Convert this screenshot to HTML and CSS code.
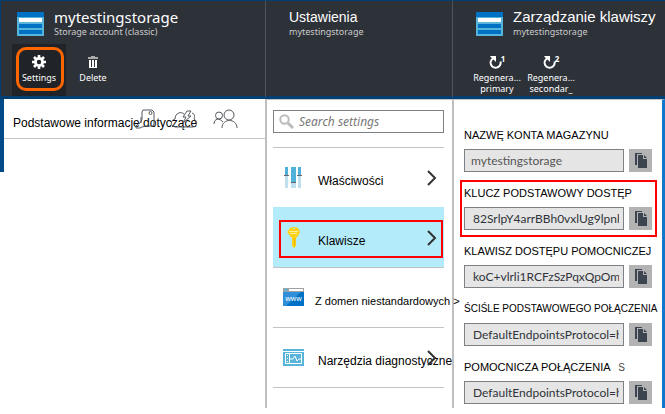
FILE: index.html
```html
<!DOCTYPE html>
<html lang="pl">
<head>
<meta charset="utf-8">
<title>mytestingstorage</title>
<link rel="stylesheet" href="styles.css">
</head>
<body>
<svg class="defs" width="0" height="0" aria-hidden="true">
  <symbol id="storage" viewBox="0 0 27 24">
    <path fill="#59b4d9" d="M0 0h27v24H0z"/><path fill="#0072c6" d="M0 0h27v5H0z"/>
    <path fill="#fff" d="M2 6h23v4H2z"/><path fill="#0072c6" d="M2 12h23v4H2zM2 18h23v4H2z"/>
  </symbol>
  <symbol id="copy" viewBox="0 0 23 23">
    <path fill="#3c454f" d="M6 4h7v1H8v11H6z"/>
    <path fill="#3c454f" d="M9 6h5v4h4v9H9z"/><path fill="#3c454f" d="M15 6l3 3h-3z"/>
  </symbol>
  <symbol id="chevron" viewBox="0 0 10 16">
    <path fill="none" stroke="#333" stroke-width="2" d="M1 1l7 7-7 7"/>
  </symbol>
  <symbol id="regen" viewBox="0 0 14 14">
    <path fill="none" stroke="#fff" stroke-width="2" d="M4 3.500a5 5 0 1 0 7.500 3"/>
    <path fill="#fff" d="M1 1h6v6L5 5 2.500 3z"/>
  </symbol>
</svg>
<main class="portal">
  <section class="blade overview">
    <header class="head">
      <div class="title">
        <svg class="logo" aria-hidden="true"><use href="#storage"/></svg>
        <div><h1>mytestingstorage</h1><p>Storage account (classic)</p></div>
      </div>
      <div class="tools">
        <button class="tool active" type="button">
          <svg viewBox="0 0 14 14" aria-hidden="true"><circle cx="7" cy="7" r="3.600" fill="none" stroke="#fff" stroke-width="2.800"/><path stroke="#fff" stroke-width="2.600" d="M7 0v3M7 11v3M0 7h3M11 7h3M2 2l2 2M10 10l2 2M2 12l2-2M10 4l2-2"/></svg>
          <span>Settings</span>
        </button>
        <button class="tool" type="button">
          <svg viewBox="0 0 14 14" aria-hidden="true"><path fill="#aaa" d="M5 1h4v1h3v2H2V2h3z"/><path fill="#fff" d="M3 5h8v8H3z"/><path stroke="#2d3138" d="M5.500 5v7M8.500 5v7"/></svg>
          <span>Delete</span>
        </button>
      </div>
    </header>
    <div class="body essentials">
      <div class="bar">
        <h2>Podstawowe informacje dotyczące</h2>
        <div class="marks">
          <svg width="20" height="20" viewBox="0 0 20 20" aria-hidden="true"><path d="M8 1h9l2 2v12l-1 2h-7l-4 1-2 1H1v-2l5-4 1-3V3z"/><path d="M6 8v6"/><circle cx="15.500" cy="4" r="1.500"/></svg>
          <svg width="28" height="20" viewBox="0 0 28 20" aria-hidden="true"><path d="M6 18c-6 0-6-7-1-8 0-6 6-8 9-5M17 2h4l-3 5h3l-8 7 3-6h-3zM22 4c3 1 3 4 2 6 4 2 3 8-1 8H6"/></svg>
          <svg width="25" height="20" viewBox="0 0 25 20" aria-hidden="true"><circle cx="6" cy="6.500" r="3.500"/><circle cx="16" cy="6" r="5"/><path d="M1 15c0-6 6-6 9-2M9 19c0-10 15-10 15 0"/></svg>
        </div>
      </div>
    </div>
  </section>

  <section class="blade settings">
    <header class="head">
      <div class="title"><div><h1 class="sans">Ustawienia</h1><p>mytestingstorage</p></div></div>
    </header>
    <div class="body">
      <label class="search">
        <svg width="15" height="15" viewBox="0 0 15 15" aria-hidden="true"><circle cx="5.500" cy="5.500" r="4.200" fill="none" stroke="#bbb" stroke-width="2"/><path stroke="#bbb" stroke-width="3" d="M9 9l5 5"/></svg>
        <input type="search" placeholder="Search settings" aria-label="Search settings">
      </label>
      <nav class="menu">
        <a href="#properties">
          <svg class="icon" viewBox="0 0 21 21" aria-hidden="true"><path fill="#bfdfee" d="M2 0h3v21H2zM8 0h5v21H8zM15 0h3v21h-3z"/><path fill="#4fb0d8" d="M2 0h3v8H2zM8 0h5v15H8zM15 0h3v8h-3z"/><path fill="#666" d="M1 8h5v1H1zM8 15h5v1H8zM14 8h5v1h-5z"/></svg>
          <span>Właściwości</span><svg class="chevron" aria-hidden="true"><use href="#chevron"/></svg>
        </a>
        <a class="selected" href="#keys">
          <svg class="icon" viewBox="0 0 21 21" aria-hidden="true"><path fill="#fcd116" d="M7 1l3-1h2l3 1 2 4-2 4-2 2v8l-2 2-2-2v-8L7 9 4 5z"/><path fill="#b3ebfb" d="M10 1h2v1h-2z"/><path stroke="#fff09a" d="M6 4.500h9M7 6.500h7"/><path stroke="#e9b000" d="M11.500 11v8"/></svg>
          <span>Klawisze</span><svg class="chevron" aria-hidden="true"><use href="#chevron"/></svg>
        </a>
        <a class="domain" href="#domain">
          <svg class="icon" viewBox="0 0 21 21" aria-hidden="true"><path fill="#a0a1a2" d="M0 1h21v5H0z"/><path fill="#0072c6" d="M0 5h21v14H0z"/><path fill="#2f8fd8" d="M0 5h18L3 19H0z"/><path fill="#fff" d="M6 2h14v2H6z"/><circle cx="3" cy="3" r="1.500" fill="#59b4d9"/><text x="10.500" y="14" text-anchor="middle">www</text></svg>
          <span>Z domen niestandardowych &gt;</span>
        </a>
        <a href="#diagnostics">
          <svg class="icon" viewBox="0 0 21 21" aria-hidden="true"><path fill="#59b4d9" d="M0 2h21v17H0z"/><path fill="none" stroke="#fff" d="M0 4.500h21M2.500 6.500h16v10h-16zM6.500 7v10M7 12h3l2-3 2 5 2-2h3"/><path stroke="#fff" stroke-dasharray="1 2" d="M4.500 8v8"/></svg>
          <span>Narzędzia diagnostyczne</span><svg class="chevron" aria-hidden="true"><use href="#chevron"/></svg>
        </a>
      </nav>
    </div>
  </section>

  <section class="blade keys">
    <header class="head">
      <div class="title">
        <svg class="logo" aria-hidden="true"><use href="#storage"/></svg>
        <div><h1 class="sans">Zarządzanie klawiszy</h1><p>mytestingstorage</p></div>
      </div>
      <div class="tools">
        <button class="tool" type="button"><i><svg aria-hidden="true"><use href="#regen"/></svg><sup>1</sup></i><span>Regenera...<br>primary</span></button>
        <button class="tool" type="button"><i><svg aria-hidden="true"><use href="#regen"/></svg><sup>2</sup></i><span>Regenera...<br>secondar_</span></button>
      </div>
    </header>
    <form class="body">
      <div class="field account">
        <label for="f1">NAZWĘ KONTA MAGAZYNU</label>
        <div><input id="f1" readonly value="mytestingstorage"><button type="button" aria-label="Copy"><svg aria-hidden="true"><use href="#copy"/></svg></button></div>
      </div>
      <div class="field marked">
        <label for="f2">KLUCZ PODSTAWOWY DOSTĘP</label>
        <div><input id="f2" readonly value="82SrlpY4arrBBh0vxlUg9lpnk"><button type="button" aria-label="Copy"><svg aria-hidden="true"><use href="#copy"/></svg></button></div>
      </div>
      <div class="field">
        <label for="f3">KLAWISZ DOSTĘPU POMOCNICZEJ</label>
        <div><input id="f3" readonly value="koC+vlrli1RCFzSzPqxQpOm"><button type="button" aria-label="Copy"><svg aria-hidden="true"><use href="#copy"/></svg></button></div>
      </div>
      <div class="field small">
        <label for="f4">ŚCIŚLE PODSTAWOWEGO POŁĄCZENIA</label>
        <div><input id="f4" readonly value="DefaultEndpointsProtocol=h"><button type="button" aria-label="Copy"><svg aria-hidden="true"><use href="#copy"/></svg></button></div>
      </div>
      <div class="field">
        <label for="f5">POMOCNICZA POŁĄCZENIA <span>S</span></label>
        <div><input id="f5" readonly value="DefaultEndpointsProtocol=h"><button type="button" aria-label="Copy"><svg aria-hidden="true"><use href="#copy"/></svg></button></div>
      </div>
    </form>
  </section>
</main>
</body>
</html>
```
FILE: styles.css
```css
* { box-sizing: border-box; }
body { margin: 0; background: #fff; color: #000; font: 12px/16px "Liberation Sans", sans-serif; }
h1, h2, p { margin: 0; font-weight: 400; }
button, input { font: inherit; margin: 0; }
.defs { position: absolute; }
.portal { display: grid; grid-template-columns: 265fr 187fr 213fr; }
.blade { display: flex; flex-direction: column; min-width: 0; }
.blade + .blade .head { border-left: 1px solid #50545a; }

.head { height: 99px; background: #2d3138; border-top: 1px solid #003e73; border-bottom: 3px solid #003e73; color: #fff; }
.overview .head { border-left: 1px solid #003e73; }
.title { display: flex; gap: 10px; height: 43px; padding: 7px 0 0 16px; white-space: nowrap; }
.settings .title, .keys .title { padding-left: 23px; }
.logo { width: 27px; height: 24px; margin-top: 4px; }
h1 { font: 15px/18px "Noto Sans", sans-serif; }
h1.sans { font: 14px/18px "Liberation Sans", sans-serif; }
.keys h1.sans { font-size: 15px; }
.title p { font: 9px/12px "Noto Sans", sans-serif; color: #ccc; }
.tools { display: flex; padding-left: 11px; }
.keys .tools { padding-left: 17px; }
.tool { position: relative; width: 54px; height: 52px; padding: 11px 0 0; border: 0; background: none; color: #fff; font: 9px/11px "Noto Sans", sans-serif; display: flex; flex-direction: column; align-items: center; gap: 3px; white-space: nowrap; }
.tool svg { width: 14px; height: 14px; display: block; flex: none; }
.tool i { display: flex; font-style: normal; }
.tool sup { font: bold 8px/8px "Noto Sans", sans-serif; margin-left: -2px; }
.tool.active { background: #202328; }
.tool.active::after { content: ""; position: absolute; inset: 3px 2px 5px 4px; border: 3px solid #f60; border-radius: 10px; }

.body { flex: 1; border-top: 1px solid #c3c3c3; }
.blade + .blade .body { border-left: 2px solid #bfbfbf; }
.essentials { border-top: 0; }
.bar { position: relative; border-left: 4px solid #004b87; height: 73px; }
.bar h2 { font-size: 12px; line-height: 16px; padding: 16px 0 0 9px; height: 40px; border-bottom: 1px solid #c8c8c8; white-space: nowrap; }
.marks { position: absolute; top: 10px; left: 131px; display: flex; gap: 15px; }
.marks svg { fill: none; stroke: #555a60; }

.settings .body { padding: 10px 8px 19px 6px; }
.search { display: flex; align-items: center; gap: 5px; height: 23px; padding-left: 5px; border: 1px solid #7d8185; }
.search input { flex: 1; min-width: 0; border: 0; padding: 0; outline: 0; background: none; font: italic 12px/16px "Noto Sans", sans-serif; }
.search input::placeholder { color: #777; opacity: 1; }
.menu { margin-top: 14px; }
.menu a { display: flex; align-items: center; height: 60px; padding: 6px 7px 0 10px; border-top: 1px solid #c3c3c3; color: #000; text-decoration: none; white-space: nowrap; position: relative; }
.menu a:last-child { height: 61px; border-bottom: 1px solid #c3c3c3; }
.menu a:nth-child(2) { border-color: #b3ebfb; }
.menu .icon { width: 21px; height: 21px; flex: none; margin: -6px 14px 0 0; }
.menu .domain .icon { margin-right: 11px; }
.icon text { font: 7px "Noto Sans", sans-serif; fill: #fff; }
.menu span { flex: 1; min-width: 0; }
.menu .domain span { font-size: 11px; }
.chevron { width: 10px; height: 16px; flex: none; margin-top: -6px; }
.menu .selected { background: #b3ebfb; }
.selected::after { content: ""; position: absolute; inset: 12px 1px 9px 6px; border: 2px solid #f00; }

.keys .body { border-right: 3px solid #1177cc; padding: 25px 10px 4px; }
.field { position: relative; margin-bottom: 11px; }
.field:last-child { margin-bottom: 0; }
.field label { display: block; height: 24px; font-size: 11px; line-height: 20px; white-space: nowrap; }
.field label span { margin-left: 5px; font-size: 10px; color: #444; }
.field.small label { font-size: 10px; }
.field div { display: flex; gap: 5px; }
.field input { flex: 1; min-width: 0; height: 23px; padding: 0 4px 0 8px; border: 1px solid #7d8185; background: #e5e5e5; color: #30343a; font: 12px/18px Lato, "Noto Sans", sans-serif; outline: 0; }
.field.account input { padding-left: 6px; color: #555; }
.field button { width: 23px; height: 23px; padding: 0; border: 0; background: #b3b3b3; }
.field button svg { width: 23px; height: 23px; display: block; }
.marked::after { content: ""; position: absolute; inset: -3px -5px -7px -4px; border: 2px solid #f00; pointer-events: none; }
```
